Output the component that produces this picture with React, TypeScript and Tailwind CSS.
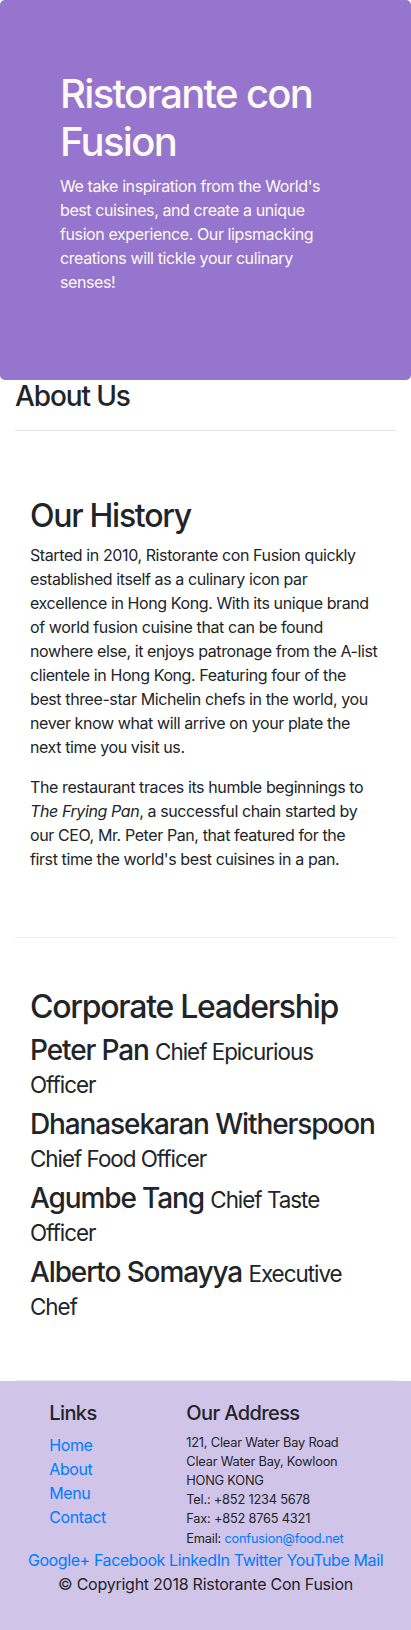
import React from "react";

const leaders = [
  { name: "Peter Pan", title: "Chief Epicurious Officer" },
  { name: "Dhanasekaran Witherspoon", title: "Chief Food Officer" },
  { name: "Agumbe Tang", title: "Chief Taste Officer" },
  { name: "Alberto Somayya", title: "Executive Chef" },
];

export default function App() {
  return (
    <div className="font-[Inter,sans-serif] text-[#212529] text-base leading-6 tracking-[-0.4px] bg-white">
      <header className="bg-[#9575cd] text-[#fffaf0] rounded-[5px] pt-[70px] pb-[70px] px-[60px]">
        <h1 className="text-[40px] leading-[48px] font-medium tracking-[-0.042em] mb-2">Ristorante con Fusion</h1>
        <p className="mb-4 whitespace-nowrap">
          We take inspiration from the World's
          <br />
          best cuisines, and create a unique
          <br />
          fusion experience. Our lipsmacking
          <br />
          creations will tickle your culinary
          <br />
          senses!
        </p>
      </header>

      <div className="px-[15px]">
        <h3 className="text-[28px] leading-[33.6px] font-medium tracking-[-0.04em]">About Us</h3>
        <hr className="my-4 border-0 border-t border-[#e4e4e4]" />

        <section className="py-[50px] px-[15px] border-b border-[#ececec]">
          <h2 className="text-[32px] leading-[38.4px] font-medium tracking-[-0.04em] mb-2">Our History</h2>
          <p className="mb-4 whitespace-nowrap">
            Started in 2010, Ristorante con Fusion quickly
            <br />
            established itself as a culinary icon par
            <br />
            excellence in Hong Kong. With its unique brand
            <br />
            of world fusion cuisine that can be found
            <br />
            nowhere else, it enjoys patronage from the A-list
            <br />
            clientele in Hong Kong. Featuring four of the
            <br />
            best three-star Michelin chefs in the world, you
            <br />
            never know what will arrive on your plate the
            <br />
            next time you visit us.
          </p>
          <p className="mb-4 whitespace-nowrap">
            The restaurant traces its humble beginnings to
            <br />
            <em>The Frying Pan</em>, a successful chain started by
            <br />
            our CEO, Mr. Peter Pan, that featured for the
            <br />
            first time the world's best cuisines in a pan.
          </p>
        </section>

        <section className="py-[50px] px-[15px] border-b border-[#ececec]">
          <h2 className="text-[32px] leading-[38.4px] font-medium tracking-[-0.04em] mb-2">Corporate Leadership</h2>
          {leaders.map((l) => (
            <h3 key={l.name} className="text-[28px] leading-[1.175] font-medium tracking-[-0.04em] mb-2">
              {l.name}{" "}
              <small className="text-[22.4px] font-normal tracking-[-0.045em]">{l.title}</small>
            </h3>
          ))}
        </section>
      </div>

      <footer className="bg-[#d1c4e9] pt-5 pb-5">
        <div className="flex flex-wrap">
          <div className="ml-[34.25px] w-[137px] px-[15px]">
            <h5 className="text-xl leading-6 font-medium tracking-[-0.03em] mb-2">Links</h5>
            <ul className="mb-4">
              <li><a className="text-[#007bff]" href="#">Home</a></li>
              <li><a className="text-[#007bff]" href="#">About</a></li>
              <li><a className="text-[#007bff]" href="#">Menu</a></li>
              <li><a className="text-[#007bff]" href="#">Contact</a></li>
            </ul>
          </div>
          <div className="w-[239.75px] px-[15px]">
            <h5 className="text-xl leading-6 font-medium tracking-[-0.03em] mb-2">Our Address</h5>
            <address className="not-italic text-[12.8px] leading-[19.2px] tracking-[-0.2px]">
              121, Clear Water Bay Road<br />
              Clear Water Bay, Kowloon<br />
              HONG KONG<br />
              Tel.: +852 1234 5678<br />
              Fax: +852 8765 4321<br />
              Email: <a className="text-[#007bff]" href="#">confusion@food.net</a>
            </address>
          </div>
          <div className="w-full text-center text-[#007bff] whitespace-nowrap">
            <a href="#">Google+</a> <a href="#">Facebook</a> <a href="#">LinkedIn</a> <a href="#">Twitter</a>{" "}
            <a href="#">YouTube</a> <a href="#">Mail</a>
          </div>
          <div className="w-full text-center">
            <p className="mb-4 tracking-[-0.25px]">© Copyright 2018 Ristorante Con Fusion</p>
          </div>
        </div>
      </footer>
    </div>
  );
}
